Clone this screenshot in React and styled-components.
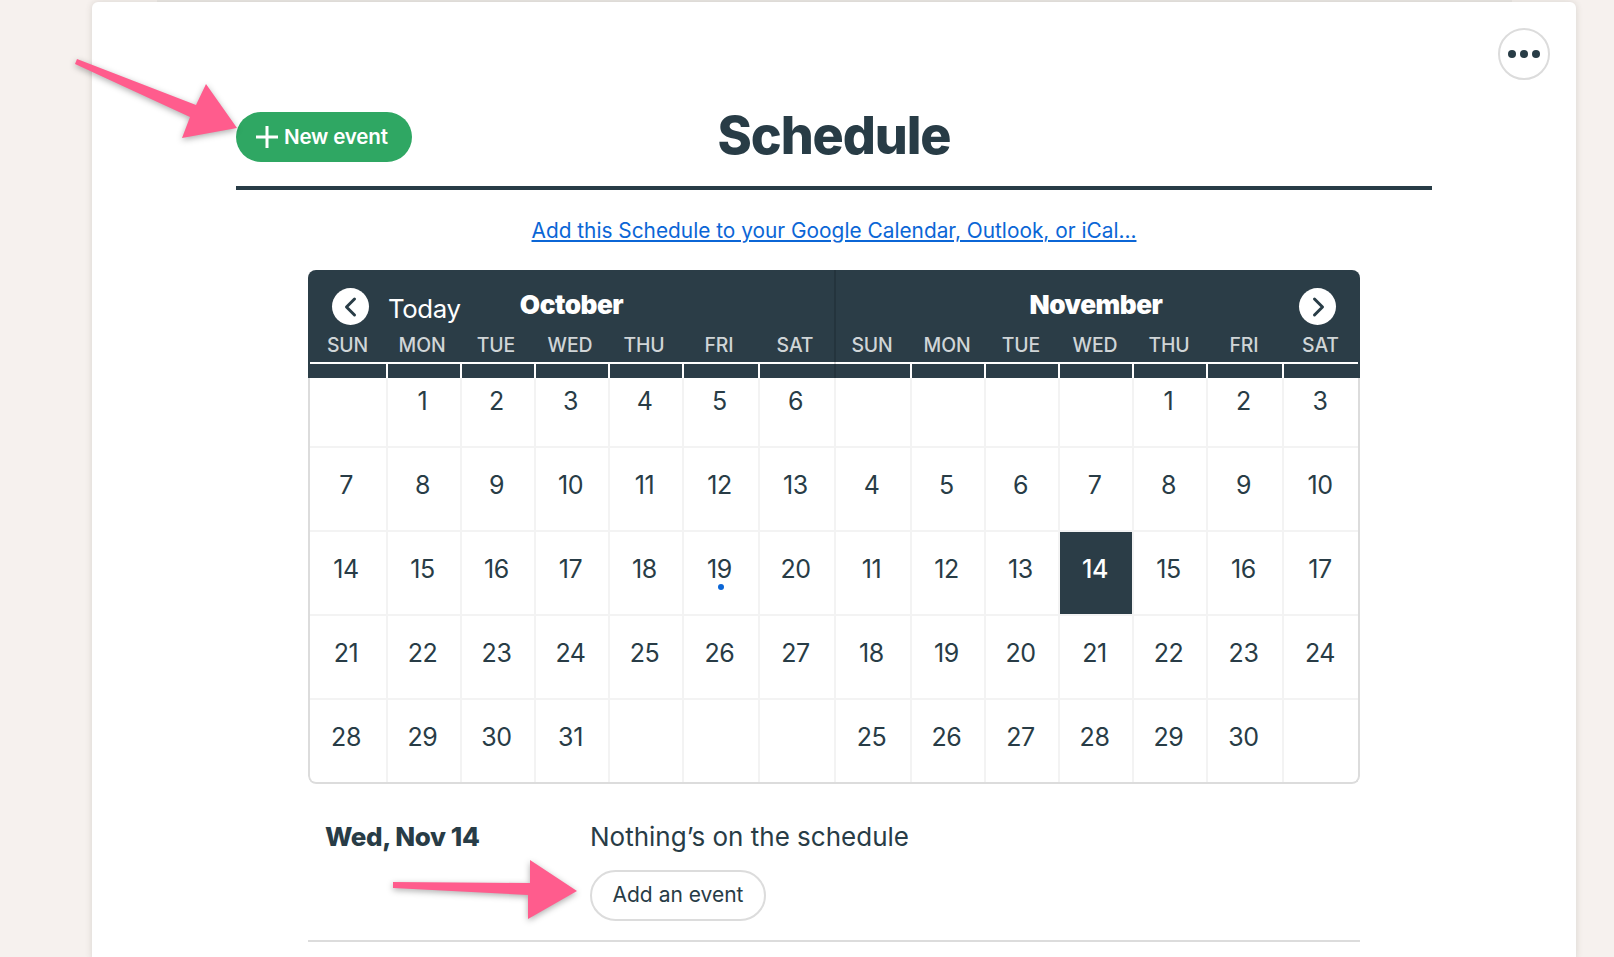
import React from 'react';
import styled, { createGlobalStyle } from 'styled-components';

const INK = '#283c46';
const FONT = 'Inter, "Noto Sans", sans-serif';

const Global = createGlobalStyle`
  html, body { margin: 0; padding: 0; height: 957px; overflow: hidden; background: #f6f1ee; }
  body { font-family: ${FONT}; color: ${INK}; }
  * { box-sizing: border-box; }
`;

const Page = styled.div`position: relative; width: 1614px; height: 957px; overflow: hidden;`;
const BackSheet = styled.div`height: 2px; margin: 0 102px 0 157px; background: #ebe8e5;`;
const Card = styled.main`
  position: relative; width: 1484px; height: 960px; margin-left: 92px;
  padding: 110px 144px 0; background: #fff; border-radius: 6px;
  box-shadow: 0 0 7px rgba(70, 60, 50, .16);
`;
const MoreButton = styled.button`
  position: absolute; top: 26px; left: 1406px; width: 52px; height: 52px; padding: 0;
  display: flex; align-items: center; justify-content: center; gap: 4px;
  background: #fff; border: 2px solid #dcdcdc; border-radius: 50%;
`;
const Dot = styled.span`width: 8px; height: 8px; border-radius: 50%; background: ${INK};`;
const Header = styled.header`
  display: grid; grid-template-columns: 1fr auto 1fr; align-items: center;
  height: 50px; margin-bottom: 24px;
`;
const NewButton = styled.button`
  justify-self: start; display: flex; align-items: center; gap: 5px;
  width: 176px; height: 50px; padding: 0 0 0 19px; border: 0; border-radius: 25px;
  background: #2fa763; color: #fff; font: 600 20.6px/1 ${FONT}; letter-spacing: -.2px;
`;
const Title = styled.h1`
  margin: -2px 0 0; font: 800 52px/50px ${FONT}; letter-spacing: -1.1px; color: ${INK};
`;
const Rule = styled.hr`margin: 0; height: 4px; border: 0; background: ${INK};`;
const LinkRow = styled.div`text-align: center; margin-top: 27px; height: 27px; line-height: 28px;`;
const Sync = styled.a`color: #0b66d6; font-size: 20.85px; text-decoration: underline;`;
const Calendar = styled.section`
  position: relative; display: flex; width: 1052px; height: 514px; margin: 26px auto 0;
  border-radius: 8px; overflow: hidden;
  &::before {
    content: ''; position: absolute; left: 526px; top: 0; bottom: 0; width: 2px;
    background: rgba(0, 0, 0, .14);
  }
  &::after {
    content: ''; position: absolute; left: 0; right: 0; top: 108px; bottom: 0;
    border: 2px solid #dcdcdc; border-top: 0; border-radius: 0 0 8px 8px; pointer-events: none;
  }
`;
const Month = styled.div`width: ${p => p.$width}px; flex: none;`;
const MonthHead = styled.div`height: 108px; background: #2b3d47;`;
const TitleRow = styled.div`display: grid; grid-template-columns: 1fr auto 1fr; height: 60px;`;
const NavSide = styled.div`
  display: flex; align-items: flex-start; gap: 19px; padding-top: 18px;
  justify-content: ${p => (p.$end ? 'flex-end' : 'flex-start')};
  padding-left: ${p => (p.$end ? 0 : 24)}px; padding-right: ${p => (p.$end ? 24 : 0)}px;
`;
const Round = styled.button`
  width: 37px; height: 37px; padding: 0; border: 0; border-radius: 50%; background: #fff;
  display: flex; align-items: center; justify-content: center;
`;
const Today = styled.span`color: #fff; font-size: 25.8px; line-height: 42px; letter-spacing: -.4px;`;
const MonthName = styled.h2`
  margin: 0; padding-top: 16px; padding-right: ${p => p.$nudge || 0}px;
  color: #fff; font: 900 26.2px/38px ${FONT}; letter-spacing: -.5px;
`;
const WeekRow = styled.div`
  display: grid; grid-template-columns: ${p => p.$cols}; height: 30px;
  align-items: center; text-align: center; margin-bottom: 2px;
  color: #d0d5d7; font-size: 19.4px; font-weight: 500; letter-spacing: -.1px;
`;
const WeekLabel = styled.span`padding-right: ${p => p.$inset}px;`;
const Ticks = styled.div`
  display: grid; grid-template-columns: ${p => p.$cols}; height: 16px;
  border-top: 2px solid #fff;
  margin-left: ${p => p.$ml || 0}px; margin-right: ${p => p.$mr || 0}px;
`;
const Tick = styled.span`
  margin-right: -1px;
  border-right: 2px solid ${p => (p.$hide ? 'transparent' : '#fff')};
`;
const DayGrid = styled.div`
  display: grid; grid-template-columns: ${p => p.$cols};
  grid-template-rows: 69px repeat(3, 84px) 84px;
`;
const Cell = styled.div`
  position: relative; text-align: center; font-size: 25px; line-height: 30px;
  padding: ${p => (p.$first ? 8 : 23)}px 2px 0 0;
  margin: 0 -1px -1px 0;
  border-right: 2px solid #f3f3f3; border-bottom: 2px solid #f3f3f3;
  letter-spacing: -.4px;
  ${p => p.$selected && `
    background: #2b3d47; background-clip: padding-box; color: #fff; font-weight: 500;
    border-left: 1px solid #f3f3f3; border-top: 1px solid #f3f3f3; padding-top: 22px;
  `}
`;
const EventDot = styled.i`
  position: absolute; left: 50%; top: 53px; width: 6px; height: 6px; margin-left: -3px;
  border-radius: 50%; background: #0b66d6;
`;
const Agenda = styled.section`
  display: grid; grid-template-columns: 265px 1fr; width: 1052px; margin: 0 auto;
  padding: 36px 0 18px 17px; border-bottom: 2px solid #dcdcdc; height: 158px;
`;
const AgendaDate = styled.div`font: 800 26px/34px ${FONT}; letter-spacing: -.4px;`;
const AgendaBody = styled.div`display: flex; flex-direction: column; align-items: flex-start; gap: 16px;`;
const Empty = styled.p`margin: 0; font-size: 26px; line-height: 34px;`;
const AddButton = styled.button`
  width: 176px; height: 51px; padding: 0 0 2px; background: #fff; border: 2px solid #dcdcdc;
  border-radius: 26px; color: ${INK}; font: 400 21px/1 ${FONT};
`;
const Annotations = styled.svg`
  position: absolute; left: 0; top: 0; pointer-events: none;
  filter: drop-shadow(0 2px 3px rgba(0, 0, 0, .32));
`;

const HEADS = ['SUN', 'MON', 'TUE', 'WED', 'THU', 'FRI', 'SAT'];
const range = n => Array.from({ length: n }, (_, i) => i + 1);
const MONTHS = [
  { name: 'October', width: 527, labelInset: [0, 4, 4, 4, 4, 4, 4], cols: '79px 74px 74px 74px 74px 76px 76px', ticks: '77px 74px 74px 74px 74px 76px 76px', ml: 2, lead: 1, days: 31, trail: 3 },
  { name: 'November', width: 525, nudge: 3, labelInset: [2, 2, 2, 2, 2, 2, 2], cols: '76px 74px 74px 74px 74px 76px 77px', ticks: '76px 74px 74px 74px 74px 76px 75px', mr: 2, lead: 4, days: 30, trail: 1 },
];

const Chevron = ({ left }) => (
  <svg width="20" height="22" viewBox="0 0 20 22" fill="none" stroke={INK} strokeWidth="3" strokeLinecap="round" strokeLinejoin="round">
    <path d={left ? 'M13.5 3 5.5 11l8 8' : 'M6.5 3l8 8-8 8'} />
  </svg>
);

const MonthView = ({ m, idx }) => {
  const cells = [...Array(m.lead).fill(null), ...range(m.days), ...Array(m.trail).fill(null)];
  return (
    <Month $width={m.width}>
      <MonthHead>
        <TitleRow>
          <NavSide>
            {idx === 0 && <Round aria-label="Previous"><Chevron left /></Round>}
            {idx === 0 && <Today>Today</Today>}
          </NavSide>
          <MonthName $nudge={m.nudge}>{m.name}</MonthName>
          <NavSide $end>
            {idx === 1 && <Round aria-label="Next"><Chevron /></Round>}
          </NavSide>
        </TitleRow>
        <WeekRow $cols={m.cols}>
          {HEADS.map((h, i) => <WeekLabel key={h} $inset={m.labelInset[i]}>{h}</WeekLabel>)}
        </WeekRow>
        <Ticks $cols={m.ticks} $ml={m.ml} $mr={m.mr}>
          {HEADS.map((h, i) => <Tick key={h} $hide={i === 6} />)}
        </Ticks>
      </MonthHead>
      <DayGrid $cols={m.cols}>
        {cells.map((d, i) => (
          <Cell key={i} $first={i < 7} $selected={idx === 1 && d === 14}>
            {d}
            {idx === 0 && d === 19 && <EventDot />}
          </Cell>
        ))}
      </DayGrid>
    </Month>
  );
};

export default function App() {
  return (
    <Page>
      <Global />
      <BackSheet />
      <Card>
        <MoreButton aria-label="More"><Dot /><Dot /><Dot /></MoreButton>
        <Header>
          <NewButton>
            <svg width="24" height="24" viewBox="0 0 24 24" stroke="#fff" strokeWidth="3" fill="none"><path d="M12 1v22M1 12h22" /></svg>
            New event
          </NewButton>
          <Title>Schedule</Title>
          <span />
        </Header>
        <Rule />
        <LinkRow><Sync href="#">Add this Schedule to your Google Calendar, Outlook, or iCal…</Sync></LinkRow>
        <Calendar>
          {MONTHS.map((m, i) => <MonthView key={m.name} m={m} idx={i} />)}
        </Calendar>
        <Agenda>
          <AgendaDate>Wed, Nov 14</AgendaDate>
          <AgendaBody>
            <Empty>Nothing’s on the schedule</Empty>
            <AddButton>Add an event</AddButton>
          </AgendaBody>
        </Agenda>
      </Card>
      <Annotations width="1614" height="957" viewBox="0 0 1614 957">
        <polygon fill="#ff5c8d" points="77,59 196,105 206,84 237,128 182,138 190,117 75,64" />
        <polygon fill="#ff5c8d" points="393,882 530,883 530,860 577,891 528,919 528,895 393,888" />
      </Annotations>
    </Page>
  );
}
